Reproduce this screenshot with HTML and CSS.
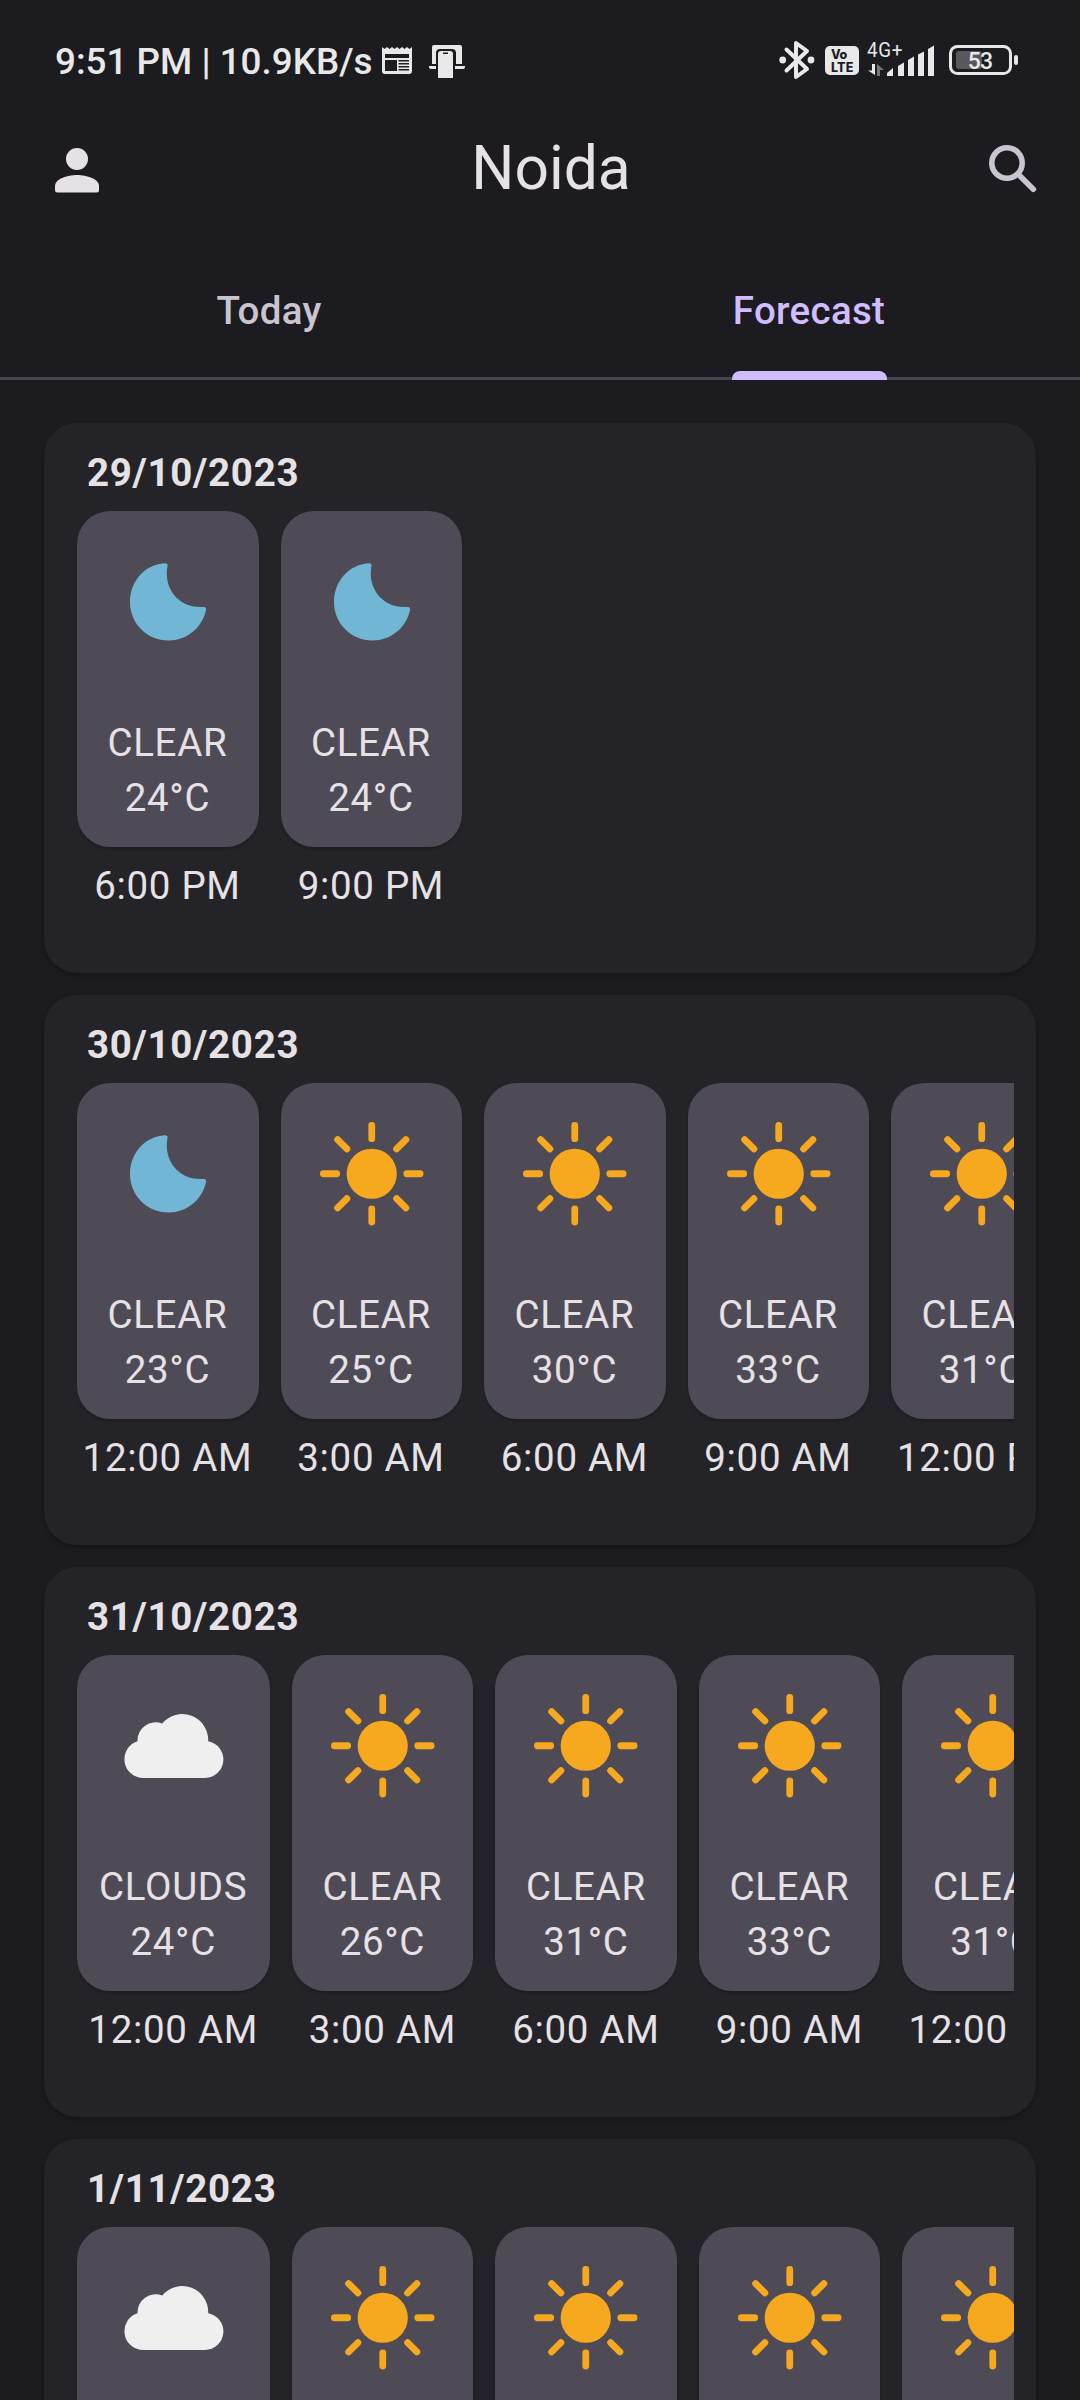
FILE: index.html
```html
<!DOCTYPE html>
<html lang="en">
<head>
<meta charset="utf-8">
<title>Noida forecast</title>
<link rel="stylesheet" href="styles.css">
</head>
<body>
<svg class="defs" aria-hidden="true">
  <symbol id="sun" viewBox="0 0 137.5 137.5">
    <circle cx="68.75" cy="68.75" r="25.1" fill="#f6a81e"/>
    <g stroke="#f6a81e" stroke-width="6.8" stroke-linecap="round">
      <path d="M68.75 20.4V33.7M68.75 103.8V117.1M20.4 68.75H33.7M103.8 68.75H117.1M34.6 34.6L43.9 43.9M93.6 93.6L102.9 102.9M34.6 102.9L43.9 93.6M93.6 43.9L102.9 34.6"/>
    </g>
  </symbol>
  <symbol id="moon" viewBox="0 0 137.5 137.5">
    <path fill="#71b7d5" d="M65.500 30.200C67.600 30 69 31 68.500 33C64 55.500 80 75.500 104 74C106.500 73.800 107.800 75.500 107 77.500C102.500 95.500 87.500 107.500 69.500 107.500C48 107.500 31 90.500 31 69C31 48 46 31.500 65.500 30.200Z"/>
  </symbol>
  <symbol id="cloud" viewBox="0 0 137.5 137.5">
    <path fill="#efefef" d="M38.300 101A18.800 18.800 0 0 1 32.500 64.300A18.200 18.200 0 0 1 57.200 46.500A26 26 0 0 1 103.200 64.300A18.500 18.500 0 0 1 100 101Z"/>
  </symbol>
</svg>

<header class="status">
  <span class="clock">9:51 PM | 10.9KB/s</span>
  <svg class="news" width="30" height="30" viewBox="0 0 30 30"><path fill="#e8e8e8" fill-rule="evenodd" d="M0 1L2.500 3L5 1L7.500 3L10 1L12.500 3L15 1L17.500 3L20 1L22.500 3L25 1L27.500 3L30 1V25Q30 28 27 28H3Q0 28 0 25ZM3 8V12H27V8ZM3 14V25H15V14ZM16.500 14V15.500H27V14ZM16.500 17V18.500H27V17ZM16.500 20V21.500H27V20ZM16.500 23V24.500H27V23Z"/></svg>
  <svg class="cast" width="36" height="34" viewBox="0 0 36 34"><path fill="#e8e8e8" fill-rule="evenodd" d="M3 2Q3 0 5 0H31Q33 0 33 2V19H27V8Q27 4 23 4H11Q7 4 7 8V19H3ZM0 21H7V24H2Q0 24 0 22ZM26 21H36V22Q36 24 34 24H26ZM9 9Q9 6 12 6H21Q24 6 24 9V33H9ZM14 7.500V9H19V7.500Z"/></svg>
  <span class="fill"></span>
  <svg class="bt" width="36" height="40" viewBox="0 0 36 40"><path fill="none" stroke="#e8e8e8" stroke-width="4" stroke-linejoin="round" stroke-linecap="round" d="M7.500 9.500L28 29L17 37V3L28 11L7.500 30.500"/><circle cx="3.700" cy="20" r="3.400" fill="#e8e8e8"/><circle cx="32" cy="20" r="3.400" fill="#e8e8e8"/></svg>
  <svg class="volte" width="34" height="30" viewBox="0 0 34 30"><rect width="34" height="29" rx="5" fill="#e8e8e8"/><g fill="#1c1b1f" font-family="Inter, sans-serif" font-weight="800" font-size="12.500"><text x="6" y="13" textLength="17">Vo</text><text x="6" y="25.500" textLength="23">LTE</text></g></svg>
  <svg class="signal" width="70" height="43" viewBox="0 -5 70 43"><text x="0" y="15.500" fill="#e8e8e8" font-family="Roboto, sans-serif" font-size="20" textLength="36" lengthAdjust="spacingAndGlyphs">4G+</text><path fill="#e8e8e8" d="M20 35V32L26 27V35ZM31 35V25L37 21.500V35ZM41 35V19L47 15.500V35ZM51 35V13.500L57 10.500V35ZM61 35V8L67 4.500V35ZM5 23H8V34L1 29.500H5Z"/><path fill="#77767a" d="M10 35V23L17 29H13V35Z"/></svg>
  <svg class="battery" width="70" height="32" viewBox="0 0 70 32"><rect x="1.500" y="1.500" width="60" height="27" rx="7" fill="none" stroke="#e8e8e8" stroke-width="3"/><rect x="7" y="6" width="26" height="18" rx="3" fill="#58575b"/><rect x="65" y="10" width="4" height="10" rx="2" fill="#e8e8e8"/><text x="31" y="24" text-anchor="middle" fill="#e8e8e8" font-family="Roboto, sans-serif" font-size="23" font-weight="500" letter-spacing="-0.700">53</text></svg>
</header>

<div class="appbar">
  <svg class="person" width="44" height="45" viewBox="0 0 44 45"><circle cx="22" cy="11" r="11" fill="#e6e1e5"/><path fill="#e6e1e5" d="M0 38C0 31 12 27 22 27S44 31 44 38V42Q44 44.500 41.500 44.500H2.500Q0 44.500 0 42Z"/></svg>
  <h1>Noida</h1>
  <svg class="search" width="48" height="48" viewBox="0 0 48 48"><circle cx="18" cy="18" r="15.200" fill="none" stroke="#cac4d0" stroke-width="5.600"/><path d="M31.500 31.500L44.300 44.300" stroke="#cac4d0" stroke-width="5.600" stroke-linecap="round"/></svg>
</div>

<nav class="tabs">
  <div class="tab"><span>Today</span></div>
  <div class="tab active"><span>Forecast</span></div>
</nav>

<main id="days"></main>
<script src="app.js"></script>
</body>
</html>
```
FILE: app.js
```js
const days = [
  ["29/10/2023", [["moon", "CLEAR", 24, "6:00 PM"], ["moon", "CLEAR", 24, "9:00 PM"]]],
  ["30/10/2023", [["moon", "CLEAR", 23, "12:00 AM"], ["sun", "CLEAR", 25, "3:00 AM"], ["sun", "CLEAR", 30, "6:00 AM"], ["sun", "CLEAR", 33, "9:00 AM"], ["sun", "CLEAR", 31, "12:00 PM"]]],
  ["31/10/2023", [["cloud", "CLOUDS", 24, "12:00 AM"], ["sun", "CLEAR", 26, "3:00 AM"], ["sun", "CLEAR", 31, "6:00 AM"], ["sun", "CLEAR", 33, "9:00 AM"], ["sun", "CLEAR", 31, "12:00 PM"]]],
  ["1/11/2023", [["cloud", "CLOUDS", 24, "12:00 AM"], ["sun", "CLEAR", 26, "3:00 AM"], ["sun", "CLEAR", 31, "6:00 AM"], ["sun", "CLEAR", 33, "9:00 AM"], ["sun", "CLEAR", 31, "12:00 PM"]]]
];

const slot = ([icon, label, temp, time]) => `
  <div class="slot">
    <div class="tile">
      <svg class="icon"><use href="#${icon}"/></svg>
      <span>${label}</span>
      <span>${temp}°C</span>
    </div>
    <span class="time">${time}</span>
  </div>`;

document.getElementById("days").innerHTML = days.map(([date, slots]) => `
  <section class="day">
    <h2>${date}</h2>
    <div class="row">${slots.map(slot).join("")}</div>
  </section>`).join("");
```
FILE: styles.css
```css
* { box-sizing: border-box; }

body {
  margin: 0;
  width: 1080px;
  height: 2400px;
  overflow: hidden;
  background: #1c1b1f;
  color: #e6e1e5;
  font-family: Roboto, sans-serif;
  font-size: 38.5px;
  line-height: 55px;
  letter-spacing: 0.69px;
}

.defs { position: absolute; width: 0; height: 0; }
svg { display: block; flex: none; }

.status {
  display: flex;
  align-items: flex-start;
  height: 124px;
  padding: 0 61px 0 55px;
}
.status svg { margin-top: 45px; }
.clock {
  width: 327px;
  margin-top: 34px;
  font-size: 36.8px;
  font-weight: 500;
  letter-spacing: 0;
  color: #e8e8e8;
  white-space: nowrap;
}
.status .news { margin-top: 46px; }
.cast { margin-left: 17px; }
.fill { flex: 1; }
.status .bt { margin-top: 40px; }
.status .volte { margin: 46px 0 0 10px; }
.status .signal { margin: 36px 0 0 8px; }
.status .battery { margin: 45px 0 0 12px; }

.appbar {
  display: flex;
  align-items: center;
  height: 90px;
  padding: 0 43px 0 55px;
}
.person { margin-top: 2px; }
h1 {
  flex: 1;
  margin: 0;
  padding: 0 0 2px 14px;
  font-size: 60.5px;
  font-weight: 400;
  line-height: 77px;
  letter-spacing: 0;
  text-align: center;
}

.tabs {
  display: flex;
  height: 166px;
  padding-top: 41px;
  border-bottom: 3px solid #49454f;
}
.tab {
  flex: 1;
  display: flex;
  justify-content: center;
  color: #cac4d0;
  font-weight: 500;
  letter-spacing: 0.28px;
}
.tab span { height: 124px; padding: 28px 2px 0 0; }
.active span { color: #d0bcff; position: relative; }
.active span::after {
  content: "";
  position: absolute;
  left: -1px;
  right: 0;
  bottom: -1px;
  height: 9px;
  border-radius: 8px 8px 0 0;
  background: #d0bcff;
}

#days {
  display: flex;
  flex-direction: column;
  gap: 22px;
  height: 2020px;
  overflow: hidden;
  padding: 43px 44px 0;
}
.day {
  flex: none;
  height: 550px;
  padding: 22px 22px 0 33px;
  border-radius: 33px;
  background: #242328;
  box-shadow: 0 2px 4px rgba(0, 0, 0, 0.3);
}
h2 {
  margin: 0 0 11px;
  padding-left: 10px;
  font-size: 38.5px;
  font-weight: 700;
  line-height: 55px;
}
.row { display: flex; gap: 22px; overflow: hidden; }
.slot {
  flex: none;
  display: flex;
  flex-direction: column;
  align-items: center;
  gap: 11px;
}
.tile {
  display: flex;
  flex-direction: column;
  align-items: center;
  min-width: 181.5px;
  height: 335.5px;
  padding: 22px;
  border-radius: 33px;
  background: #4f4b56;
  box-shadow: 0 2px 3px rgba(0, 0, 0, 0.22);
}
.tile span, .time { padding-right: 0.7px; }
.icon { width: 137.5px; height: 137.5px; margin-bottom: 44px; }
.time { white-space: nowrap; }
```
